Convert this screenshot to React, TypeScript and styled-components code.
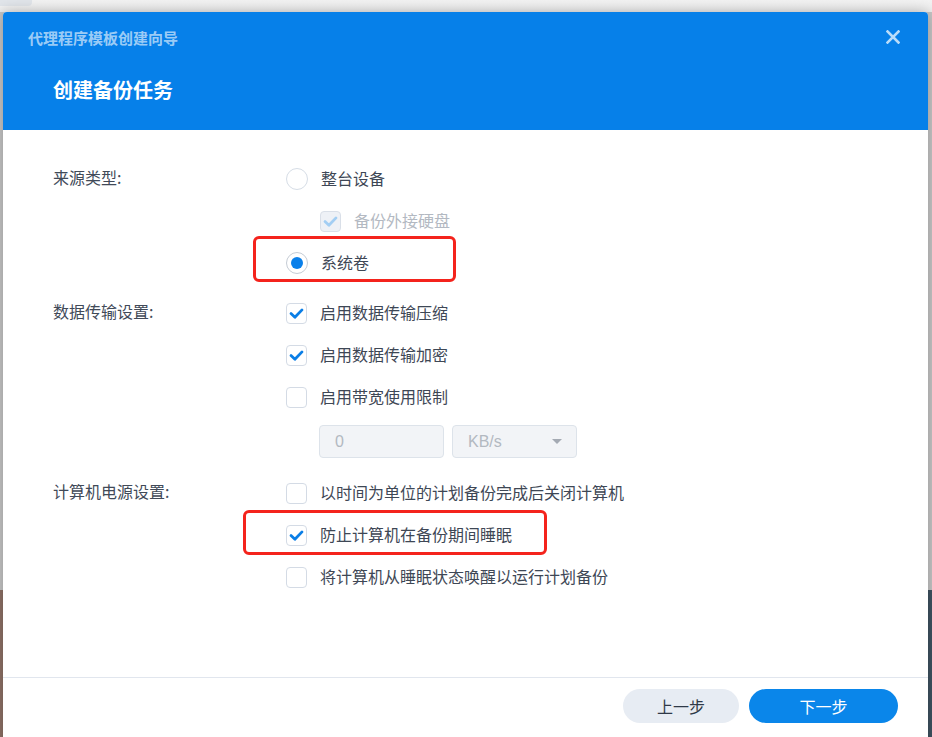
import styled, { createGlobalStyle } from "styled-components";

const GlobalStyle = createGlobalStyle`
  html, body {
    margin: 0;
    padding: 0;
  }
  body {
    font-family: "Noto Sans CJK SC", "Noto Sans", "Liberation Sans", sans-serif;
    -webkit-font-smoothing: antialiased;
  }
`;

type Item = {
  kind: "radio" | "check";
  label: string;
  on?: boolean;
  disabled?: boolean;
  indent?: boolean;
  mark?: { left: number; top: number; width: number; height: number };
};

type Section = {
  title: string;
  items: Item[];
  bandwidth?: boolean;
};

const sections: Section[] = [
  {
    title: "来源类型:",
    items: [
      { kind: "radio", label: "整台设备" },
      { kind: "check", label: "备份外接硬盘", on: true, disabled: true, indent: true },
      {
        kind: "radio",
        label: "系统卷",
        on: true,
        mark: { left: -33, top: -6, width: 203, height: 46 },
      },
    ],
  },
  {
    title: "数据传输设置:",
    items: [
      { kind: "check", label: "启用数据传输压缩", on: true },
      { kind: "check", label: "启用数据传输加密", on: true },
      { kind: "check", label: "启用带宽使用限制" },
    ],
    bandwidth: true,
  },
  {
    title: "计算机电源设置:",
    items: [
      { kind: "check", label: "以时间为单位的计划备份完成后关闭计算机" },
      {
        kind: "check",
        label: "防止计算机在备份期间睡眠",
        on: true,
        mark: { left: -43, top: -4, width: 304, height: 45 },
      },
      { kind: "check", label: "将计算机从睡眠状态唤醒以运行计划备份" },
    ],
  },
];

function Control({ item }: { item: Item }) {
  if (item.kind === "radio") {
    return (
      <Radio $on={!!item.on}>
        {item.on && <Dot />}
      </Radio>
    );
  }
  return (
    <Box $disabled={!!item.disabled}>
      {item.on && (
        <svg width="21" height="21" viewBox="0 0 21 21">
          <path
            d="M5 10.6 L8.9 14.3 L16 6.9"
            fill="none"
            stroke={item.disabled ? "#a3cef3" : "#0a7ee6"}
            strokeWidth="2.8"
            strokeLinecap="round"
            strokeLinejoin="round"
          />
        </svg>
      )}
    </Box>
  );
}

export default function App() {
  return (
    <>
      <GlobalStyle />
      <Backdrop>
        <Dialog>
          <Header>
            <TopBar>
              <Wizard>代理程序模板创建向导</Wizard>
              <Close aria-label="close">
                <svg width="14" height="14" viewBox="0 0 14 14">
                  <path
                    d="M1.5 1.5 L12.5 12.5 M12.5 1.5 L1.5 12.5"
                    stroke="rgba(255,255,255,0.72)"
                    strokeWidth="2.6"
                    strokeLinecap="square"
                  />
                </svg>
              </Close>
            </TopBar>
            <Title>创建备份任务</Title>
          </Header>

          <Body>
            {sections.map((s) => (
              <Group key={s.title}>
                <GroupLabel>{s.title}</GroupLabel>
                <Options>
                  {s.items.map((it) => (
                    <OptionRow key={it.label} $indent={!!it.indent} $disabled={!!it.disabled}>
                      <Control item={it} />
                      <OptionText>{it.label}</OptionText>
                      {it.mark && (
                        <Highlight
                          style={{
                            left: it.mark.left,
                            top: it.mark.top,
                            width: it.mark.width,
                            height: it.mark.height,
                          }}
                        />
                      )}
                    </OptionRow>
                  ))}
                  {s.bandwidth && (
                    <FieldRow>
                      <Field>0</Field>
                      <Select>
                        KB/s
                        <Caret />
                      </Select>
                    </FieldRow>
                  )}
                </Options>
              </Group>
            ))}
          </Body>

          <Footer>
            <Button $primary={false} $width={116}>上一步</Button>
            <Button $primary $width={149}>下一步</Button>
          </Footer>
        </Dialog>
      </Backdrop>
    </>
  );
}

const Backdrop = styled.div`
  position: relative;
  width: 932px;
  height: 737px;
  overflow: hidden;
  box-sizing: border-box;
  padding: 12px 4px 0 3px;
  background:
    linear-gradient(to bottom, #f3f3f3 0, #eeeeee 12px, transparent 12px),
    linear-gradient(to right, #8f7267 0 3px, transparent 3px 928px, #3f5361 928px) left bottom / 100% 147px no-repeat,
    #c7c7c7;

  &::before {
    content: "";
    position: absolute;
    left: 0;
    top: 0;
    width: 32px;
    height: 6px;
    border-radius: 0 0 4px 0;
    background: #e1e5ea;
  }
`;

const Dialog = styled.div`
  position: relative;
  display: flex;
  flex-direction: column;
  height: 760px;
  background: #ffffff;
  border-radius: 4px 4px 0 0;
  overflow: hidden;
  box-shadow: 0 0 14px rgba(0, 0, 0, 0.28);
`;

const Header = styled.header`
  height: 118px;
  box-sizing: border-box;
  padding: 0 28px 0 25px;
  background: #0680e9;
`;

const TopBar = styled.div`
  display: flex;
  align-items: center;
  justify-content: space-between;
  height: 50px;
`;

const Wizard = styled.div`
  color: rgba(255, 255, 255, 0.62);
  font-size: 15px;
  font-weight: 700;
`;

const Close = styled.button`
  display: flex;
  padding: 0;
  border: none;
  background: none;
`;

const Title = styled.h1`
  margin: 13px 0 0 25px;
  color: #ffffff;
  font-size: 20px;
  font-weight: 700;
  line-height: 30px;
`;

const Body = styled.main`
  height: 547px;
  box-sizing: border-box;
  padding: 28px 50px 0;
`;

const Group = styled.section`
  display: grid;
  grid-template-columns: 233px 1fr;
  margin-bottom: 8px;
`;

const GroupLabel = styled.div`
  color: #414a58;
  font-size: 16px;
  line-height: 38px;
  padding-bottom: 4px;
`;

const Options = styled.div`
  display: flex;
  flex-direction: column;
`;

const OptionRow = styled.label<{ $indent: boolean; $disabled: boolean }>`
  position: relative;
  display: flex;
  align-items: center;
  gap: 13px;
  height: 42px;
  padding-left: ${({ $indent }) => ($indent ? "34px" : "0")};
  color: ${({ $disabled }) => ($disabled ? "#b3b9c2" : "#3e4755")};
  font-size: 16px;
`;

const OptionText = styled.span`
  padding-bottom: 3px;
`;

const Box = styled.span<{ $disabled: boolean }>`
  display: inline-flex;
  width: 21px;
  height: 21px;
  flex: none;
  box-sizing: border-box;
  border: 1px solid ${({ $disabled }) => ($disabled ? "#d9dfe8" : "#d4dbe5")};
  border-radius: 4px;
  background: ${({ $disabled }) => ($disabled ? "#eef1f6" : "#ffffff")};

  svg {
    margin: -1px;
  }
`;

const Radio = styled.span<{ $on: boolean }>`
  display: inline-flex;
  align-items: center;
  justify-content: center;
  width: 22px;
  height: 22px;
  flex: none;
  box-sizing: border-box;
  border: 1px solid ${({ $on }) => ($on ? "#c5ccd5" : "#d6dde6")};
  border-radius: 50%;
  background: #ffffff;
`;

const Dot = styled.span`
  width: 12px;
  height: 12px;
  border-radius: 50%;
  background: #0a80ea;
`;

const Highlight = styled.span`
  position: absolute;
  box-sizing: border-box;
  border: 3px solid #f4231c;
  border-radius: 6px;
  pointer-events: none;
`;

const FieldRow = styled.div`
  display: flex;
  gap: 8px;
  margin: 7px 0 6px 33px;
`;

const Field = styled.div`
  display: flex;
  align-items: center;
  width: 125px;
  height: 33px;
  box-sizing: border-box;
  padding: 0 14px 0 15px;
  border: 1px solid #dde3ea;
  border-radius: 4px;
  background: #f2f4f7;
  color: #b3b9c1;
  font-family: "Liberation Sans", "Noto Sans", sans-serif;
  font-size: 16px;
`;

const Select = styled(Field)`
  justify-content: space-between;
`;

const Caret = styled.span`
  width: 0;
  height: 0;
  border-left: 5px solid transparent;
  border-right: 5px solid transparent;
  border-top: 5px solid #a4aab3;
`;

const Footer = styled.footer`
  display: flex;
  justify-content: flex-end;
  gap: 10px;
  padding: 11px 30px 0;
  border-top: 1px solid #e1e6ee;
`;

const Button = styled.button<{ $primary: boolean; $width: number }>`
  width: ${({ $width }) => $width}px;
  height: 34px;
  border: none;
  border-radius: 17px;
  background: ${({ $primary }) => ($primary ? "#0a86ea" : "#e7ecf3")};
  color: ${({ $primary }) => ($primary ? "#ffffff" : "#2f3947")};
  font-family: inherit;
  font-size: 16px;
`;
